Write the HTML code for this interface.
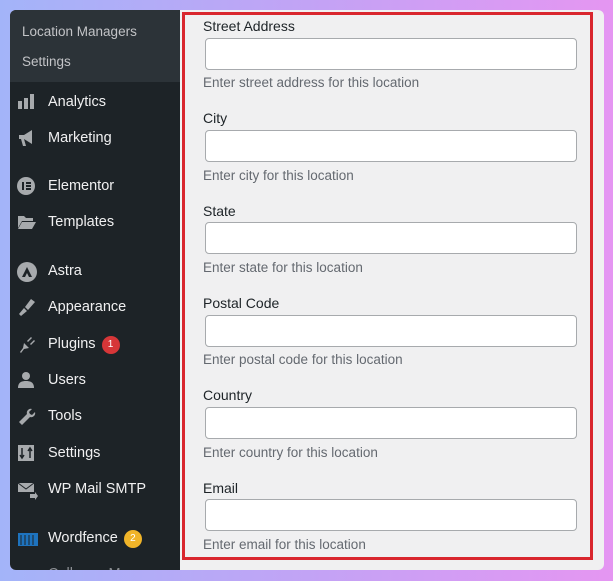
<!DOCTYPE html>
<html><head><meta charset="utf-8"><style>
*{margin:0;padding:0;box-sizing:border-box}
body{width:613px;height:581px;overflow:hidden;background:linear-gradient(90deg,#a3b4f9 0%,#c2a3f5 50%,#e596f2 100%);font-family:"Liberation Sans",sans-serif;position:relative}
.card{position:absolute;left:10px;top:10px;width:594px;height:560px;background:#f0f0f1;border-radius:6px;overflow:hidden}
.side{position:absolute;left:0;top:0;width:170px;height:560px;background:#1d2327}
.sub{height:72px;background:#2c3338;padding-top:13px}
.sub div{color:#c3c4c7;font-size:13.5px;height:30px;line-height:18px;padding-left:12px}
.it{position:absolute;left:0;color:#f0f0f1;font-size:14.5px;height:20px;line-height:20px;padding-left:38px;width:170px}
.it svg{position:absolute;left:7px;top:1px}
.badge{display:inline-block;width:18px;height:18px;border-radius:9px;color:#fff;font-size:10px;text-align:center;line-height:18px;margin-left:6px;vertical-align:1px}
.red{position:absolute;left:172px;top:2px;width:411px;height:548px;border:3px solid #d9272e}
.lbl{position:absolute;left:193px;font-size:14px;color:#1d2327}
.inp{position:absolute;left:195px;width:372px;height:32px;background:#fff;border:1px solid #a7aaad;border-radius:4px}
.help{position:absolute;left:193px;font-size:13.5px;color:#646970}
</style></head><body>
<div class="card">
<div class="side">
<div class="sub"><div>Location Managers</div><div>Settings</div></div>
</div>
<div class="it" style="top:82px"><svg width="20" height="18"><rect x="1" y="8" width="4" height="8" fill="#a7aaad"/><rect x="7" y="5" width="4" height="11" fill="#a7aaad"/><rect x="13" y="1" width="4" height="15" fill="#a7aaad"/></svg>Analytics</div>
<div class="it" style="top:118px"><svg width="20" height="18"><path d="M2 6h5l8-5v14l-8-5H2z M4 10l2 7h3l-2-7z" fill="#a7aaad"/></svg>Marketing</div>
<div class="it" style="top:166px"><svg width="20" height="18"><circle cx="9" cy="9" r="9" fill="#a7aaad"/><rect x="5" y="5" width="2" height="8" fill="#1d2327"/><rect x="9" y="5" width="5" height="2" fill="#1d2327"/><rect x="9" y="8" width="5" height="2" fill="#1d2327"/><rect x="9" y="11" width="5" height="2" fill="#1d2327"/></svg>Elementor</div>
<div class="it" style="top:202px"><svg width="20" height="18"><path d="M1 3h6l2 2h7v3H5L1 15z M5 9h14l-4 7H1z" fill="#a7aaad"/></svg>Templates</div>
<div class="it" style="top:251px"><svg width="20" height="20"><circle cx="10" cy="10" r="10" fill="#a7aaad"/><path d="M5 15l5-10 5 10h-3l-2-4-2 4z" fill="#1d2327"/></svg>Astra</div>
<div class="it" style="top:287px"><svg width="20" height="18"><path d="M2 16l5-6 3 3-6 5z M8 9l6-8 4 3-7 8z" fill="#a7aaad"/></svg>Appearance</div>
<div class="it" style="top:324px"><svg width="20" height="18"><path d="M3 17l3-4 1-5 5 5-5 1-3 4z M10 6l4-4 1 1-4 4z M13 9l4-4 1 1-4 4z" fill="#a7aaad"/></svg>Plugins<span class="badge" style="background:#d63638">1</span></div>
<div class="it" style="top:360px"><svg width="20" height="18"><circle cx="9" cy="5" r="4" fill="#a7aaad"/><path d="M1 17c0-6 4-7 8-7s8 1 8 7z" fill="#a7aaad"/></svg>Users</div>
<div class="it" style="top:396px"><svg width="20" height="18"><path d="M2 15l8-8a4 4 0 0 1 5-5l-3 3 1 2 2 1 3-3a4 4 0 0 1-5 5l-8 8z" fill="#a7aaad"/></svg>Tools</div>
<div class="it" style="top:433px"><svg width="20" height="18"><rect x="1" y="1" width="16" height="16" fill="#a7aaad"/><path d="M5 4v10M3 11l2 3 2-3M13 14V4M11 7l2-3 2 3" stroke="#1d2327" stroke-width="1.5" fill="none"/></svg>Settings</div>
<div class="it" style="top:469px"><svg width="22" height="20"><path d="M1 3h16v9H1z" fill="#a7aaad"/><path d="M1 3l8 6 8-6" stroke="#1d2327" fill="none"/><path d="M13 14h5v-2l3 4-3 4v-2h-5z" fill="#a7aaad"/></svg>WP Mail SMTP</div>
<div class="it" style="top:518px"><svg width="22" height="18"><path d="M1 4h20v13H1z" fill="#1e73be"/><path d="M4 6v10M8 6v10M12 6v10M16 6v10" stroke="#1d2327"/></svg>Wordfence<span class="badge" style="background:#f0b429">2</span></div>
<div class="it" style="top:554px;color:#8c8f94">Collapse Menu</div>
<div class="red"></div>
<div class="lbl" style="top:8px">Street Address</div><div class="inp" style="top:28px"></div><div class="help" style="top:65px">Enter street address for this location</div>
<div class="lbl" style="top:100px">City</div><div class="inp" style="top:120px"></div><div class="help" style="top:158px">Enter city for this location</div>
<div class="lbl" style="top:193px">State</div><div class="inp" style="top:212px"></div><div class="help" style="top:250px">Enter state for this location</div>
<div class="lbl" style="top:285px">Postal Code</div><div class="inp" style="top:305px"></div><div class="help" style="top:342px">Enter postal code for this location</div>
<div class="lbl" style="top:377px">Country</div><div class="inp" style="top:397px"></div><div class="help" style="top:435px">Enter country for this location</div>
<div class="lbl" style="top:470px">Email</div><div class="inp" style="top:489px"></div><div class="help" style="top:527px">Enter email for this location</div>
</div>
</body></html>
